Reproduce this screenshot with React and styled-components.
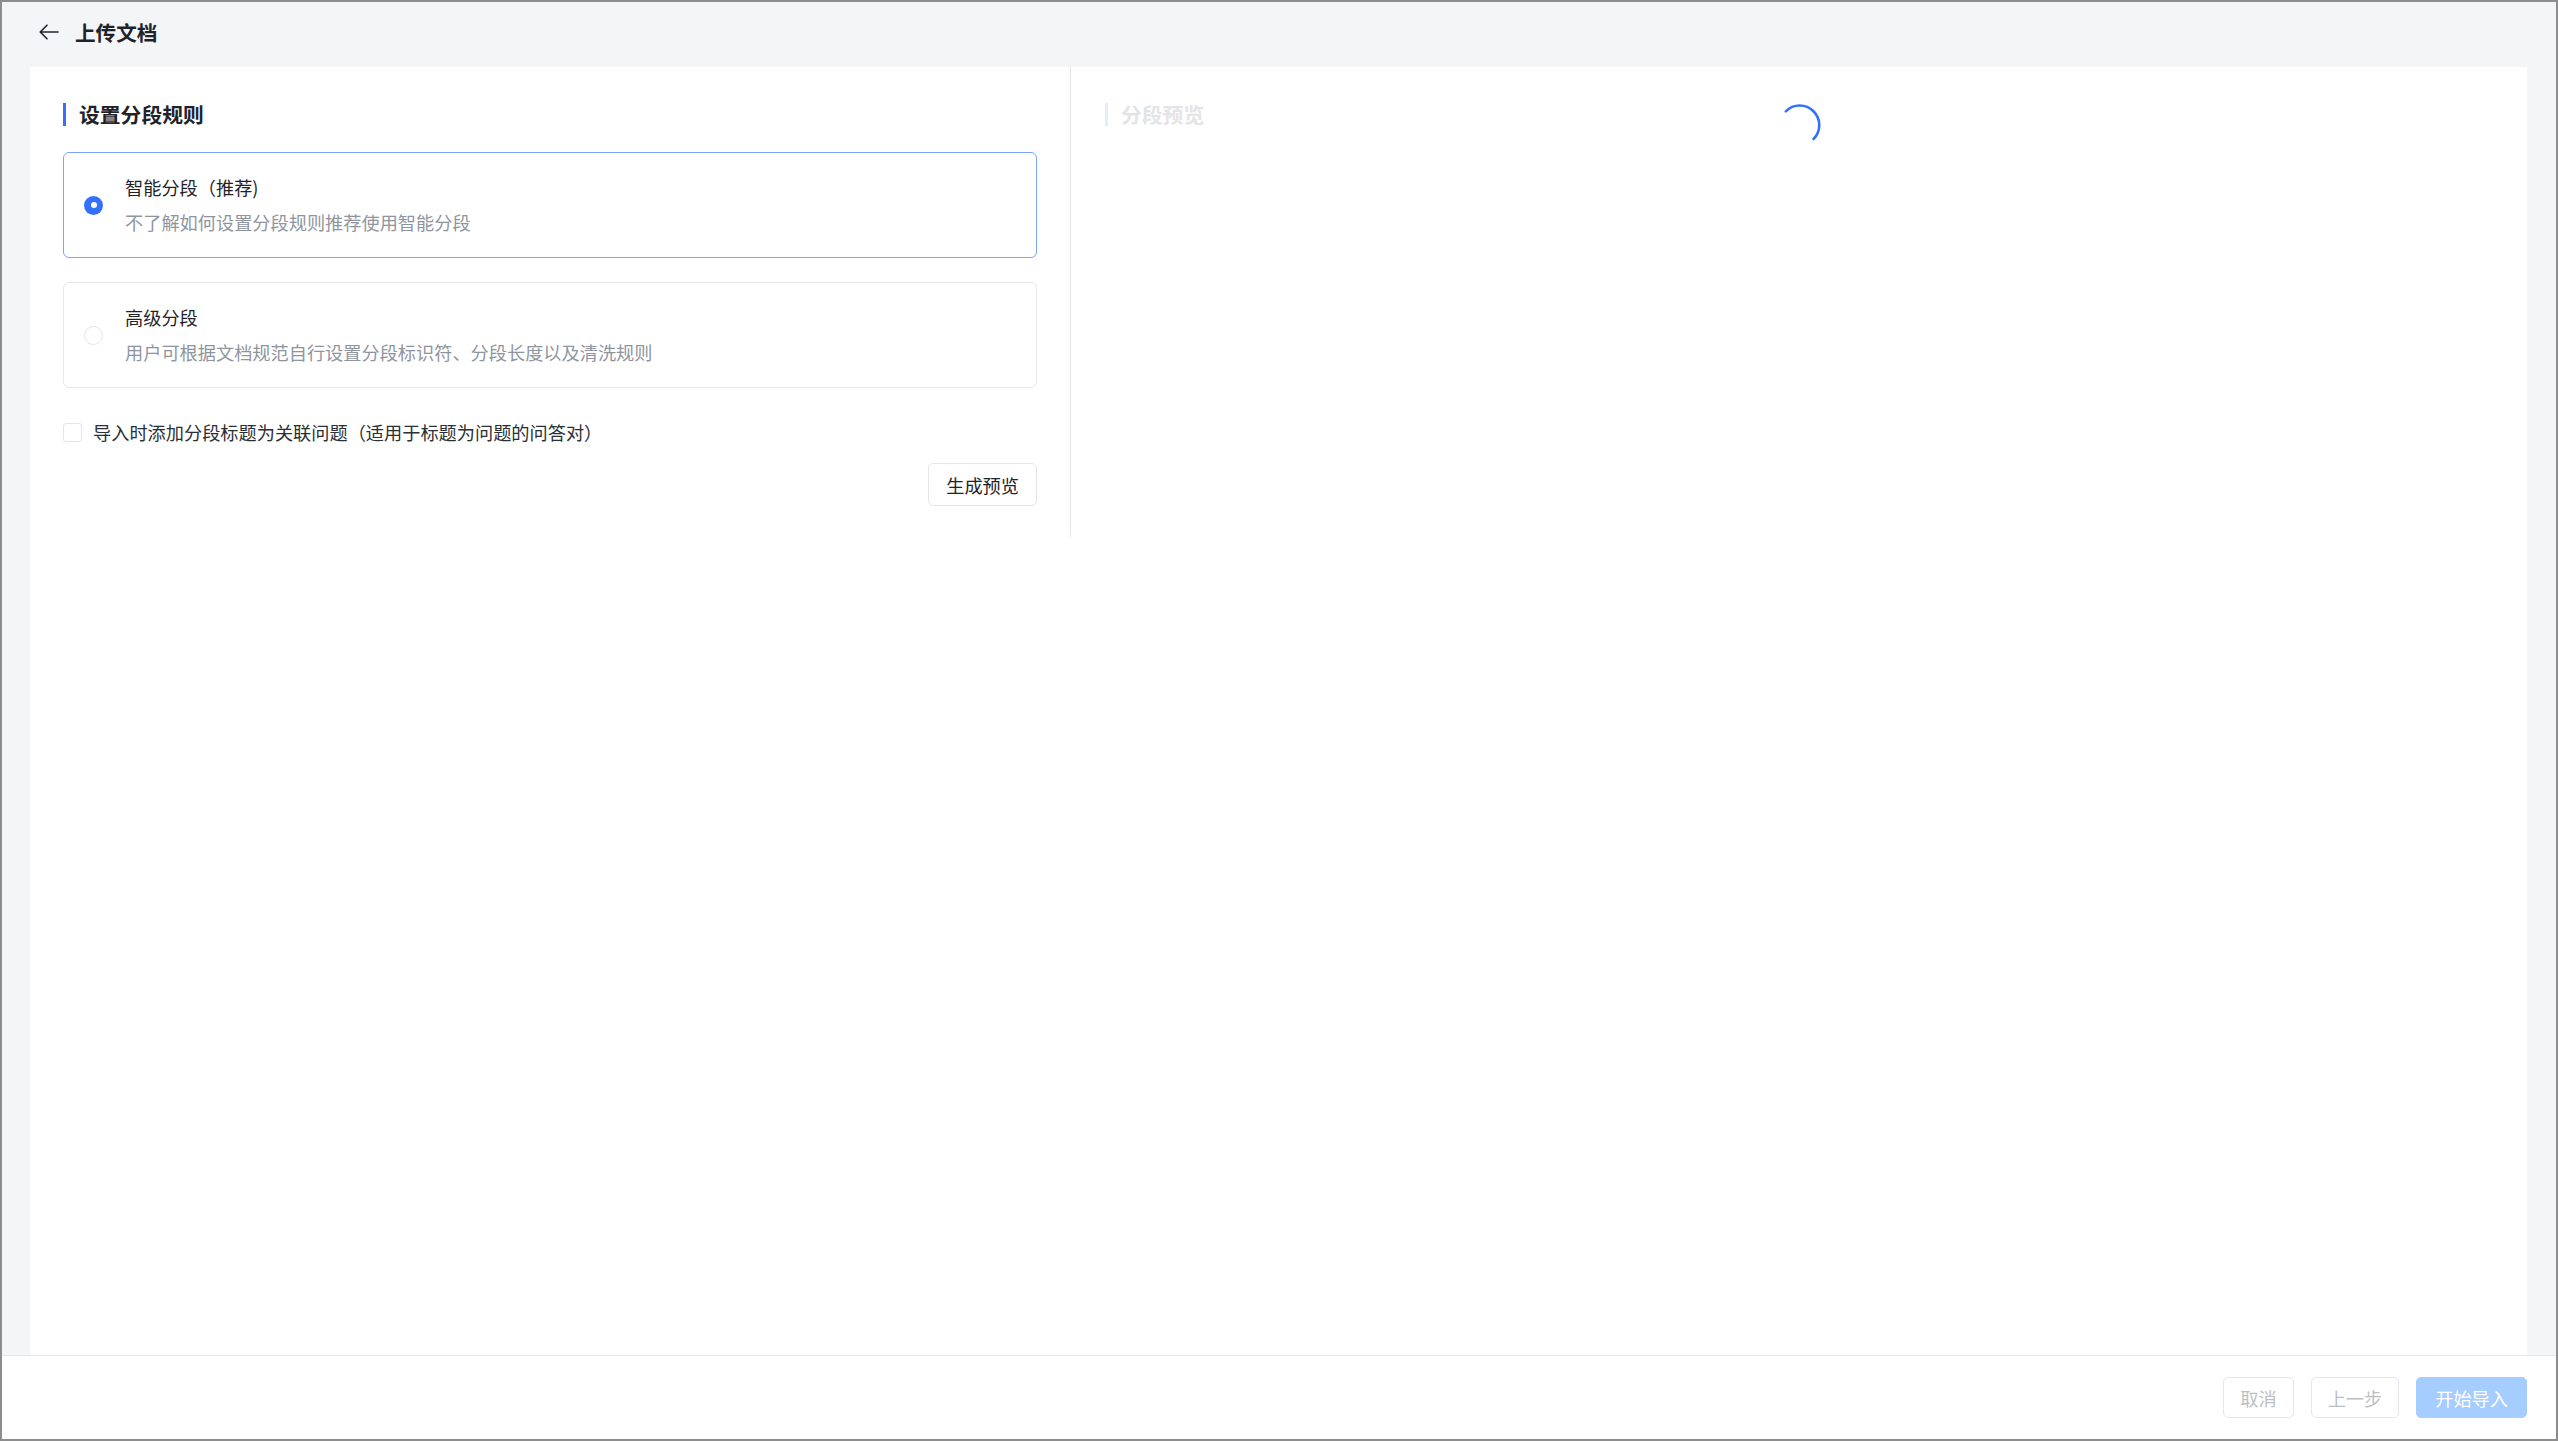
import React from 'react';
import styled, { createGlobalStyle } from 'styled-components';

// page frame
//   header: back arrow + title
//   main panel: rules column | preview column
//   footer: action buttons

const GlobalStyle = createGlobalStyle`
  html, body {
    margin: 0;
    padding: 0;
    background: #ffffff;
  }
  * {
    box-sizing: border-box;
  }
  body {
    font-family: "Noto Sans CJK SC", "Noto Sans", "Liberation Sans", sans-serif;
    color: #1f2329;
    text-spacing-trim: space-all;
  }
`;

const Frame = styled.div`
  width: 100vw;
  height: 100vh;
  border: 2px solid #8d8d8d;
  background: #f4f5f7;
  display: flex;
  flex-direction: column;
`;

const Header = styled.div`
  height: 65px;
  flex-shrink: 0;
  display: flex;
  align-items: center;
  gap: 16px;
  padding: 0 0 5px 37px;
`;

const BackButton = styled.button`
  border: none;
  background: transparent;
  padding: 0;
  width: 20px;
  height: 16px;
  display: flex;
  align-items: center;
  justify-content: center;
  cursor: pointer;
  color: #1f2329;
`;

const PageTitle = styled.h1`
  margin: 0;
  font-size: 20.6px;
  line-height: 28px;
  font-weight: 600;
  color: #1f2329;
`;

const Main = styled.div`
  flex: 1;
  padding: 0 29px 0 28px;
  display: flex;
  min-height: 0;
`;

const Panel = styled.div`
  flex: 1;
  background: #ffffff;
  display: flex;
  align-items: flex-start;
`;

const RulesColumn = styled.div`
  width: 1041px;
  flex-shrink: 0;
  padding: 36px 33px 31px 33px;
  border-right: 1px solid #e5e6eb;
  display: flex;
  flex-direction: column;
`;

const PreviewColumn = styled.div`
  flex: 1;
  position: relative;
  padding: 36px 34px;
  align-self: stretch;
`;

const SectionTitle = styled.h2`
  margin: 0;
  height: 23px;
  display: flex;
  align-items: center;
  border-left: 3px solid ${p => (p.$faded ? '#e4ecfe' : '#3370ff')};
  padding-left: 13px;
  font-size: 20.8px;
  font-weight: 600;
  line-height: 23px;
  color: ${p => (p.$faded ? '#e3e4e6' : '#1f2329')};
`;

const OptionList = styled.div`
  margin-top: 26px;
  display: flex;
  flex-direction: column;
  gap: 24px;
`;

const OptionCard = styled.label`
  height: 106px;
  display: flex;
  align-items: center;
  gap: 22px;
  padding: 0 20px;
  border: 1px solid ${p => (p.$active ? '#7ba2ff' : '#e7e8eb')};
  border-radius: 6px;
  background: #ffffff;
  cursor: pointer;
`;

const Radio = styled.span`
  width: 19px;
  height: 19px;
  flex-shrink: 0;
  border-radius: 50%;
  border: ${p => (p.$checked ? 'none' : '1.5px solid #e3e5e8')};
  background: ${p => (p.$checked ? '#3370ff' : '#ffffff')};
  display: flex;
  align-items: center;
  justify-content: center;

  &::after {
    content: '';
    display: ${p => (p.$checked ? 'block' : 'none')};
    width: 6px;
    height: 6px;
    border-radius: 50%;
    background: #ffffff;
  }
`;

const OptionText = styled.div`
  display: flex;
  flex-direction: column;
  gap: 9px;
  padding-bottom: 1px;
`;

const OptionName = styled.div`
  font-size: 18.2px;
  line-height: 26px;
  color: #1f2329;
`;

const OptionDesc = styled.div`
  font-size: 18.2px;
  line-height: 26px;
  color: #8f959e;
`;

const CheckRow = styled.label`
  margin-top: 31px;
  display: flex;
  align-items: center;
  gap: 11px;
  font-size: 18.2px;
  line-height: 26px;
  color: #2b2f36;
  cursor: pointer;
`;

const CheckBox = styled.span`
  width: 19px;
  height: 19px;
  border: 1.5px solid #e3e5e8;
  border-radius: 3px;
  background: #ffffff;
  flex-shrink: 0;
`;

const ActionRow = styled.div`
  margin-top: 18px;
  display: flex;
  justify-content: flex-end;
`;

const Button = styled.button`
  height: ${p => p.$h || 41}px;
  padding: 0 ${p => p.$px || 16}px;
  border-radius: 5px;
  font-family: inherit;
  font-size: 18.2px;
  line-height: 26px;
  border: 1px solid ${p => (p.$primary ? '#a6cdff' : '#e5e6eb')};
  background: ${p => (p.$primary ? '#a6cdff' : '#ffffff')};
  color: ${p => (p.$primary ? '#ffffff' : p.$disabled ? '#bbbfc4' : '#1f2329')};
  cursor: ${p => (p.$disabled ? 'not-allowed' : 'pointer')};
`;

const Spinner = styled.div`
  position: absolute;
  left: 50%;
  top: 35px;
  width: 44px;
  height: 44px;
  margin-left: -20px;
`;

const Footer = styled.div`
  height: 84px;
  flex-shrink: 0;
  background: #ffffff;
  border-top: 1px solid #e5e6eb;
  display: flex;
  align-items: center;
  justify-content: flex-end;
  gap: 17px;
  padding: 0 29px 0 0;
`;

const ArrowLeft = () => (
  <svg width="20" height="16" viewBox="0 0 20 16" fill="none">
    <path d="M19 8H1.5M8 1.2L1.2 8L8 14.8" stroke="currentColor" strokeWidth="1.6" strokeLinecap="round" strokeLinejoin="round" />
  </svg>
);

const LoadingArc = () => (
  <svg width="44" height="44" viewBox="0 0 44 44" fill="none">
    <path d="M6.8 9.3 A19.5 19.5 0 1 1 34.5 37" stroke="#3370ff" strokeWidth="2.6" strokeLinecap="round" />
  </svg>
);

const options = [
  { name: '智能分段（推荐)', desc: '不了解如何设置分段规则推荐使用智能分段', active: true },
  { name: '高级分段', desc: '用户可根据文档规范自行设置分段标识符、分段长度以及清洗规则', active: false },
];

export default function App() {
  return (
    <>
      <GlobalStyle />
      <Frame>
        <Header>
          <BackButton aria-label="返回">
            <ArrowLeft />
          </BackButton>
          <PageTitle>上传文档</PageTitle>
        </Header>

        <Main>
          <Panel>
            <RulesColumn>
              <SectionTitle>设置分段规则</SectionTitle>
              <OptionList>
                {options.map(o => (
                  <OptionCard key={o.name} $active={o.active}>
                    <Radio $checked={o.active} />
                    <OptionText>
                      <OptionName>{o.name}</OptionName>
                      <OptionDesc>{o.desc}</OptionDesc>
                    </OptionText>
                  </OptionCard>
                ))}
              </OptionList>
              <CheckRow>
                <CheckBox />
                导入时添加分段标题为关联问题（适用于标题为问题的问答对）
              </CheckRow>
              <ActionRow>
                <Button $h={43} $px={17}>生成预览</Button>
              </ActionRow>
            </RulesColumn>

            <PreviewColumn>
              <SectionTitle $faded>分段预览</SectionTitle>
              <Spinner>
                <LoadingArc />
              </Spinner>
            </PreviewColumn>
          </Panel>
        </Main>

        <Footer>
          <Button $disabled>取消</Button>
          <Button $disabled>上一步</Button>
          <Button $primary $disabled $px={18}>开始导入</Button>
        </Footer>
      </Frame>
    </>
  );
}
